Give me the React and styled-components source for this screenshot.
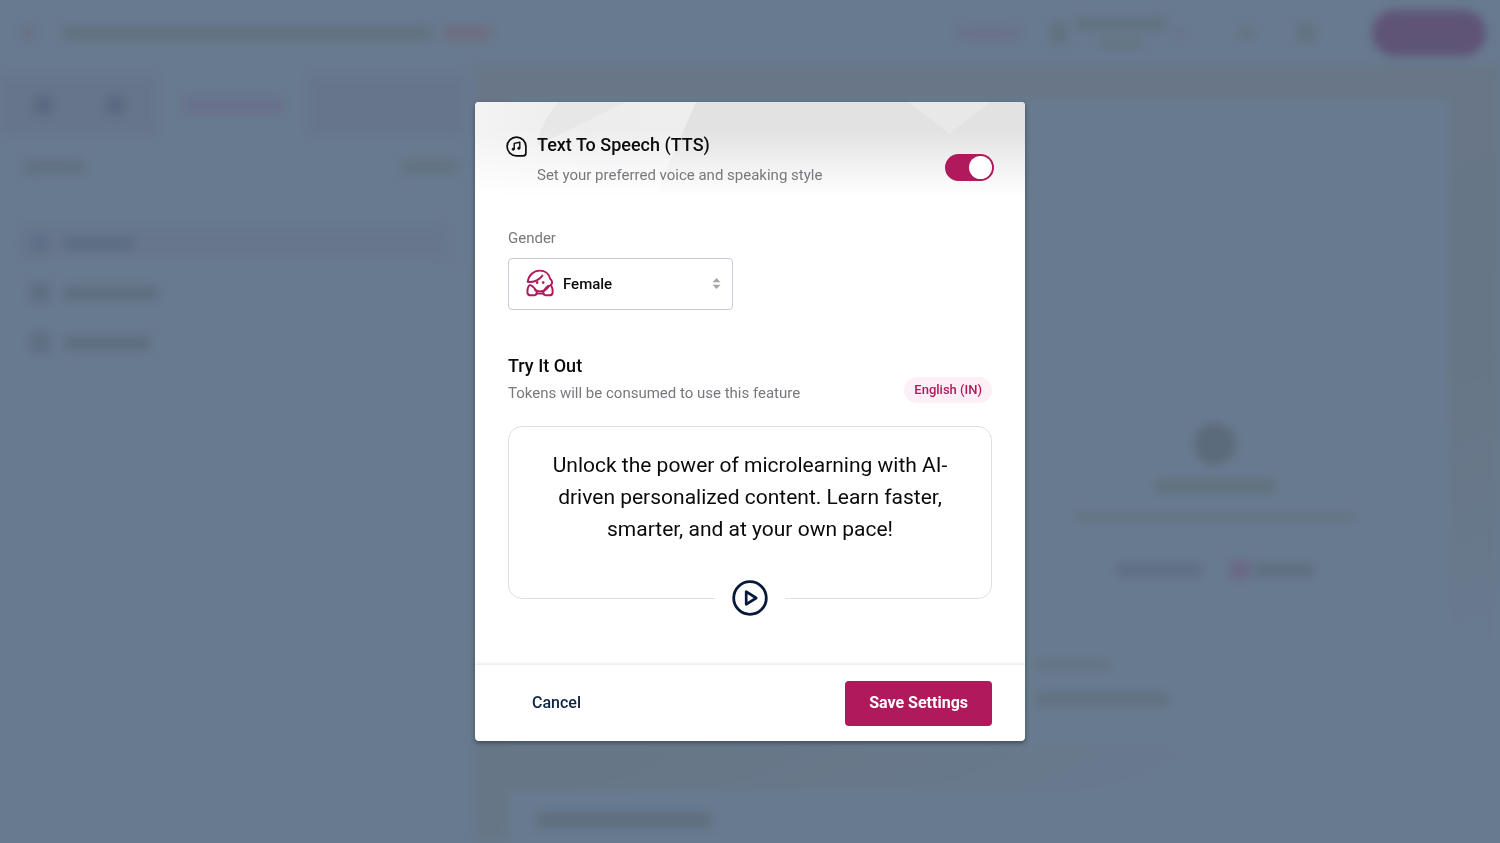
import React, { useState } from "react";
import styled, { createGlobalStyle } from "styled-components";

const GlobalStyle = createGlobalStyle`
  * {
    box-sizing: border-box;
  }
  body {
    margin: 0;
    background: #687a8f;
    font-family: Roboto, "Liberation Sans", sans-serif;
    color: #0b0b0d;
  }
  h2, h3, p {
    margin: 0;
  }
  button, select, input {
    font-family: inherit;
    margin: 0;
  }
`;

/* page behind the dialog */

const Page = styled.div`
  height: 100vh;
  overflow: hidden;
  display: flex;
  flex-direction: column;
  filter: blur(5px);
`;

const Smudge = styled.span`
  display: block;
  flex: none;
  width: ${p => p.w}px;
  height: ${p => p.h || 14}px;
  border-radius: ${p => p.$radius || 4}px;
  background: ${p => p.color || "#61717f"};
`;

const TopBar = styled.div`
  flex: none;
  height: 66px;
  padding: 0 14px 0 20px;
  display: flex;
  align-items: center;
  justify-content: space-between;
`;

const Group = styled.div`
  display: flex;
  align-items: center;
  gap: ${p => p.$gap}px;
  padding-top: ${p => p.$top || 0}px;
`;

const Stack = styled.div`
  display: flex;
  flex-direction: column;
  align-items: center;
  gap: ${p => p.$gap}px;
`;

const Columns = styled.div`
  flex: 1;
  min-height: 0;
  display: flex;
`;

const Sidebar = styled.div`
  width: 475px;
  flex: none;
  padding-top: 10px;
`;

const Tabs = styled.div`
  display: grid;
  grid-template-columns: 157px 151px 156px;
  height: 58px;
`;

const Tab = styled.div`
  display: flex;
  align-items: center;
  justify-content: center;
  gap: 52px;
  background: ${p => (p.$active ? "transparent" : "#67758a")};
`;

const SideHead = styled.div`
  display: flex;
  justify-content: space-between;
  padding: 26px 16px 54px 24px;
`;

const SideRow = styled.div`
  display: flex;
  align-items: center;
  gap: 14px;
  height: 30px;
  margin: 0 28px 20px 20px;
  padding-left: 10px;
  background: ${p => (p.$active ? "#67768b" : "transparent")};
`;

const Main = styled.div`
  flex: 1;
  padding: 32px 50px 0 33px;
  background: linear-gradient(155deg, #687687 0%, #677686 60%, #687a8f 85%);
  display: flex;
  flex-direction: column;
  gap: 44px;
`;

const Card = styled.div`
  flex: none;
  height: ${p => p.h}px;
  background: #687a8f;
`;

const EmptyState = styled.div`
  margin-left: auto;
  width: 470px;
  padding-top: 325px;
  display: flex;
  flex-direction: column;
  align-items: center;
  gap: 20px;
`;

const Lines = styled.div`
  padding: ${p => p.$pad};
  display: flex;
  flex-direction: column;
  gap: 22px;
`;

/* dialog */

const Overlay = styled.div`
  position: fixed;
  inset: 0;
  display: flex;
  align-items: center;
  justify-content: center;
`;

const Dialog = styled.section`
  width: 550px;
  max-width: 100%;
  background: #fff;
  border-radius: 4px;
  overflow: hidden;
  box-shadow: 0 2px 4px rgba(30, 45, 60, 0.6);
`;

const DialogHeader = styled.header`
  position: relative;
  display: flex;
  justify-content: space-between;
  padding: 31px 31px 25px 31px;
`;

const Facets = styled.svg`
  position: absolute;
  inset: 0;
  width: 100%;
  height: 94px;
`;

const HeaderText = styled.div`
  position: relative;
  display: flex;
  gap: 10px;

  > svg {
    margin-top: 3px;
  }
`;

const Title = styled.h2`
  font-size: 18px;
  line-height: 24px;
  font-weight: 500;
`;

const Muted = styled.p`
  margin-top: ${p => p.$top || 0}px;
  font-size: 15px;
  line-height: 20px;
  color: #77797d;
`;

const Toggle = styled.input`
  appearance: none;
  position: relative;
  align-self: flex-start;
  width: 49px;
  height: 27px;
  margin-top: 21px;
  border-radius: 14px;
  background: ${p => (p.checked ? "#b0195b" : "#b9bcc2")};
  cursor: pointer;

  &::before {
    content: "";
    position: absolute;
    top: 2px;
    left: ${p => (p.checked ? 24 : 2)}px;
    width: 23px;
    height: 23px;
    border-radius: 50%;
    background: #fff;
  }
`;

const Body = styled.div`
  padding: 18px 33px 65px;
`;

const Label = styled.label`
  display: block;
  font-size: 15px;
  line-height: 20px;
  color: #77797d;
`;

const SelectBox = styled.div`
  position: relative;
  width: 225px;
  margin: 10px 0 44px;

  > svg {
    position: absolute;
    pointer-events: none;
  }
  > svg:first-of-type {
    left: 18px;
    top: 11px;
  }
  > svg:last-of-type {
    right: 12px;
    top: 19px;
  }
`;

const Select = styled.select`
  appearance: none;
  width: 100%;
  height: 52px;
  padding: 0 32px 0 54px;
  border: 1px solid #cacbd6;
  border-radius: 4px;
  background: #fff;
  font-size: 15px;
  font-weight: 500;
  color: #0b0b0d;
`;

const TryHead = styled.div`
  display: flex;
  justify-content: space-between;
  align-items: flex-end;
`;

const Badge = styled.span`
  padding: 4px 10px;
  border-radius: 13px;
  background: #fdeff6;
  font-size: 13px;
  line-height: 18px;
  font-weight: 500;
  color: #b0195b;
`;

const Sample = styled.div`
  position: relative;
  margin-top: 23px;
  height: 173px;
  padding: 22px 32px;
  border: 1px solid #dedfe1;
  border-radius: 14px;
  font-size: 21px;
  line-height: 32px;
  text-align: center;
`;

const PlayButton = styled.button`
  position: absolute;
  left: 50%;
  bottom: -18px;
  margin-left: -35px;
  width: 70px;
  height: 36px;
  padding: 0;
  border: 0;
  background: #fff;
  display: flex;
  justify-content: center;
  cursor: pointer;
`;

const Footer = styled.footer`
  display: flex;
  justify-content: space-between;
  align-items: center;
  padding: 16px 33px 15px;
  border-top: 1px solid #eef0f2;
  box-shadow: 0 -1px 2px rgba(20, 30, 40, 0.07);
`;

const Button = styled.button`
  height: 45px;
  padding: 0 24px 2px;
  border: 0;
  border-radius: 4px;
  background: ${p => (p.$primary ? "#b0195b" : "transparent")};
  color: ${p => (p.$primary ? "#fff" : "#0d2342")};
  font-size: 16px;
  font-weight: ${p => (p.$primary ? 700 : 500)};
  cursor: pointer;
`;

const MusicIcon = () => (
  <svg width="21" height="21" viewBox="0 0 21 21" fill="none" stroke="#0b0b0d" aria-hidden="true">
    <path d="M10.5 1.1a9.4 9.4 0 1 0 0 18.8h6.4a3 3 0 0 0 3-3v-6.4a9.4 9.4 0 0 0-9.4-9.4Z" strokeWidth="1.7" />
    <path d="M8.2 13.2V7.4l5.6-1.1v6" strokeWidth="1.4" strokeLinejoin="round" />
    <circle cx="7.2" cy="13.2" r="1.1" fill="#0b0b0d" strokeWidth="0.9" />
    <circle cx="12.8" cy="12.3" r="1.1" fill="#0b0b0d" strokeWidth="0.9" />
  </svg>
);

const FemaleIcon = () => (
  <svg
    width="28"
    height="28"
    viewBox="0 0 28 28"
    fill="none"
    stroke="#b0195b"
    strokeWidth="1.9"
    strokeLinecap="round"
    strokeLinejoin="round"
    aria-hidden="true"
  >
    <path d="M4.4 13C3.3 13 2.3 13 1.7 12.9 2.6 6.3 7.5 1.6 13.7 1.6c5.2 0 9.3 3.300 10.4 8.200 2.100 1.700 2.500 3.800 1.200 5.800" />
    <path d="M4.4 13c4.800-.3 9-2.500 12-6.400" />
    <path d="M25.300 15.600c-.7 1.200-1.400 1.400-2.300 1.500-1 1.800-2.300 3.100-4 4-3.200 1.600-7.200 1.500-10.200-.4" />
    <path d="M10.200 24.500h7.600" />
    <path d="M2.600 17.300c-1 1.800-1.400 3.800-1.200 6 .2 2 1.300 3 3.200 3h3.700c2.100 0 3.100-1.500 2.400-3.300-1-2.600-2.600-4.700-4.900-6.300-1.200-.8-2.500-.6-3.200.6Z" />
    <path d="M25.500 17.300c1 1.800 1.400 3.800 1.200 6-.2 2-1.300 3-3.200 3h-3.700c-2.100 0-3.100-1.500-2.400-3.300 1-2.600 2.600-4.700 4.900-6.300" />
    <circle cx="11.200" cy="13.600" r="0.8" fill="#b0195b" strokeWidth="1.2" />
    <circle cx="17.2" cy="13.600" r="0.8" fill="#b0195b" strokeWidth="1.2" />
  </svg>
);

const SortIcon = () => (
  <svg width="9" height="13" viewBox="0 0 9 13" fill="#a3a5a9" aria-hidden="true">
    <path d="M4.5 1 8.5 5.300H.5Z" />
    <path d="M4.5 12 .5 7.700h8Z" />
  </svg>
);

const PlayIcon = () => (
  <svg width="36" height="36" viewBox="0 0 36 36" fill="none" stroke="#06193a" aria-hidden="true">
    <circle cx="18" cy="18" r="16.3" strokeWidth="2.8" />
    <path d="M14.2 11.700v12.600l10-6.300Z" strokeWidth="2.7" strokeLinejoin="round" />
  </svg>
);

const BlurredPage = () => (
  <Page aria-hidden="true">
    <TopBar>
      <Group $gap={27}>
        <Smudge w={16} h={16} color="#6a7287" />
        <Group $gap={12}>
          <Smudge w={368} h={14} />
          <Smudge w={48} h={14} color="#6e6e81" />
        </Group>
      </Group>
      <Group $gap={57}>
        <Group $gap={30}>
          <Smudge w={63} color="#6a718b" />
          <Group $gap={8}>
            <Smudge w={18} h={20} />
            <Stack $gap={8}>
              <Smudge w={90} h={12} />
              <Smudge w={42} h={10} color="#647481" />
            </Stack>
            <Smudge w={8} h={8} color="#6a7085" />
          </Group>
        </Group>
        <Group $gap={44}>
          <Smudge w={14} h={14} color="#647482" />
          <Smudge w={18} h={18} color="#627280" />
        </Group>
        <Smudge w={114} h={46} $radius={23} color="#5f5476" />
      </Group>
    </TopBar>
    <Columns>
      <Sidebar>
        <Tabs>
          <Tab>
            <Smudge w={20} h={20} color="#5b6a82" />
            <Smudge w={20} h={20} color="#5b6a82" />
          </Tab>
          <Tab $active>
            <Smudge w={102} h={16} color="#69718b" />
          </Tab>
          <Tab />
        </Tabs>
        <SideHead>
          <Smudge w={60} color="#617182" />
          <Smudge w={58} color="#637382" />
        </SideHead>
        <SideRow $active>
          <Smudge w={20} h={20} color="#607088" />
          <Smudge w={70} color="#5d6d83" />
        </SideRow>
        <SideRow>
          <Smudge w={20} h={20} color="#5e6e82" />
          <Smudge w={94} color="#5e6e80" />
        </SideRow>
        <SideRow>
          <Smudge w={20} h={20} color="#5e6e82" />
          <Smudge w={86} color="#5e6e80" />
        </SideRow>
      </Sidebar>
      <Main>
        <Card h={648}>
          <EmptyState>
            <Stack $gap={14}>
              <Smudge w={42} h={42} $radius={21} color="#5b6b7c" />
              <Smudge w={120} h={14} color="#61717f" />
            </Stack>
            <Smudge w={280} h={8} color="#637382" />
            <Group $gap={28} $top={20}>
              <Smudge w={86} color="#5f6f84" />
              <Group $gap={4}>
                <Smudge w={20} h={18} color="#696882" />
                <Smudge w={60} color="#5f6f82" />
              </Group>
            </Group>
          </EmptyState>
          <Lines $pad="81px 0 0 528px">
            <Smudge w={74} h={10} color="#637383" />
            <Smudge w={132} h={14} color="#617181" />
          </Lines>
        </Card>
        <Card h={200}>
          <Lines $pad="22px 28px">
            <Smudge w={176} h={16} color="#5f6f7e" />
          </Lines>
        </Card>
      </Main>
    </Columns>
  </Page>
);

const App = () => {
  const [enabled, setEnabled] = useState(true);
  const [gender, setGender] = useState("female");

  return (
    <>
      <GlobalStyle />
      <BlurredPage />
      <Overlay>
        <Dialog role="dialog" aria-labelledby="tts-title">
          <DialogHeader>
            <Facets viewBox="0 0 550 94" preserveAspectRatio="none" aria-hidden="true">
              <defs>
                <linearGradient id="fade" x1="0" y1="0" x2="0" y2="1">
                  <stop offset="0.3" stopColor="#fff" stopOpacity="0" />
                  <stop offset="1" stopColor="#fff" />
                </linearGradient>
                <linearGradient id="base" x1="0" y1="0" x2="1" y2="0">
                  <stop offset="0" stopColor="#f3f3f3" />
                  <stop offset="0.2" stopColor="#ededed" />
                  <stop offset="0.4" stopColor="#eeeeee" />
                </linearGradient>
              </defs>
              <rect width="550" height="94" fill="url(#base)" />
              <path d="M84 0C72 12 66 24 62 44L150 0Z" fill="#e7e7e7" />
              <path d="M221 0 180 94H550V0Z" fill="#e2e2e2" />
              <path d="M434 0 474 32 516 0Z" fill="#e8e8e8" />
              <rect width="550" height="94" fill="url(#fade)" />
            </Facets>
            <HeaderText>
              <MusicIcon />
              <div>
                <Title id="tts-title">Text To Speech (TTS)</Title>
                <Muted $top={8}>Set your preferred voice and speaking style</Muted>
              </div>
            </HeaderText>
            <Toggle
              type="checkbox"
              role="switch"
              aria-labelledby="tts-title"
              checked={enabled}
              onChange={e => setEnabled(e.target.checked)}
            />
          </DialogHeader>
          <Body>
            <Label htmlFor="gender">Gender</Label>
            <SelectBox>
              <Select id="gender" value={gender} onChange={e => setGender(e.target.value)}>
                <option value="female">Female</option>
                <option value="male">Male</option>
              </Select>
              <FemaleIcon />
              <SortIcon />
            </SelectBox>
            <TryHead>
              <div>
                <Title as="h3">Try It Out</Title>
                <Muted $top={5}>Tokens will be consumed to use this feature</Muted>
              </div>
              <Badge>English (IN)</Badge>
            </TryHead>
            <Sample>
              <p>
                Unlock the power of microlearning with AI-driven personalized content. Learn faster,
                smarter, and at your own pace!
              </p>
              <PlayButton type="button" aria-label="Play">
                <PlayIcon />
              </PlayButton>
            </Sample>
          </Body>
          <Footer>
            <Button type="button">Cancel</Button>
            <Button type="button" $primary>
              Save Settings
            </Button>
          </Footer>
        </Dialog>
      </Overlay>
    </>
  );
};

export default App;
